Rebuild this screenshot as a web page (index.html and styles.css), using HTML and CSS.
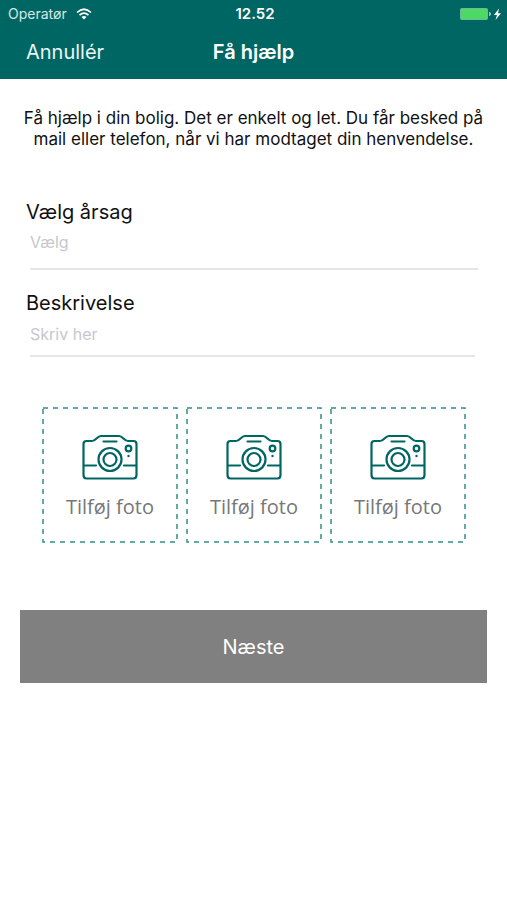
FILE: index.html
```
<!DOCTYPE html>
<html lang="da">
<head>
<meta charset="utf-8">
<meta name="viewport" content="width=device-width, initial-scale=1">
<title>Få hjælp</title>
<link rel="stylesheet" href="styles.css">
</head>
<body>
<svg class="symbols" aria-hidden="true">
  <symbol id="camera" viewBox="0 0 56 46">
    <g fill="none" stroke="currentColor" stroke-width="2.200" stroke-linecap="round" stroke-linejoin="round">
      <path d="M4.500 7H10C14 7 15 2 19 2H37C41 2 42 7 46 7H51.500Q54.500 7 54.500 10V41Q54.500 44.500 51.500 44.500H4.500Q1.500 44.500 1.500 41V10Q1.500 7 4.500 7Z"/>
      <path d="M21.500 7.500H34.500M2 31.500H14M42 31.500H54"/>
      <circle cx="28" cy="25.500" r="11.500"/>
      <circle cx="28" cy="25.500" r="6.500"/>
      <circle cx="46.500" cy="14.500" r="2.800"/>
    </g>
    <circle cx="46.500" cy="22" r="1.200" fill="currentColor"/>
  </symbol>
</svg>
<header class="top">
  <div class="status">
    <div class="carrier">
      <span>Operatør</span>
      <svg class="wifi" viewBox="0 0 16 12" aria-hidden="true">
        <g fill="none" stroke="currentColor" stroke-width="1.700">
          <path d="M1 4.500Q8 -2 15 4.500"/>
          <path d="M3.500 7.200Q8 3 12.500 7.200"/>
        </g>
        <path d="M5.500 9Q8 7 10.500 9L8 11.500Z" fill="currentColor"/>
      </svg>
    </div>
    <time class="clock">12.52</time>
    <svg class="battery" viewBox="0 0 42 14" aria-hidden="true">
      <rect x="0.500" y="1.500" width="27" height="11" rx="1" fill="#4cd964" stroke="#6fb7a0"/>
      <path d="M29 5q2 0 2 2t-2 2z" fill="#9cc8c5"/>
      <path d="M39 1.500L34 8h3l-1.500 5L41 6.200h-3z" fill="#fff"/>
    </svg>
  </div>
  <nav class="bar">
    <button class="cancel" type="button">Annullér</button>
    <h1>Få hjælp</h1>
  </nav>
</header>
<main>
  <p class="intro">Få hjælp i din bolig. Det er enkelt og let. Du får besked på mail eller telefon, når vi har modtaget din henvendelse.</p>
  <form>
    <div class="field">
      <label for="reason">Vælg årsag</label>
      <select id="reason"><option>Vælg</option></select>
    </div>
    <div class="field description">
      <label for="description">Beskrivelse</label>
      <input id="description" type="text" placeholder="Skriv her">
    </div>
    <div class="photos">
      <button class="photo" type="button">
        <svg class="dashes" aria-hidden="true"><rect width="100%" height="100%"/></svg>
        <svg class="camera" aria-hidden="true"><use href="#camera"/></svg>
        <span>Tilføj foto</span>
      </button>
      <button class="photo" type="button">
        <svg class="dashes" aria-hidden="true"><rect width="100%" height="100%"/></svg>
        <svg class="camera" aria-hidden="true"><use href="#camera"/></svg>
        <span>Tilføj foto</span>
      </button>
      <button class="photo" type="button">
        <svg class="dashes" aria-hidden="true"><rect width="100%" height="100%"/></svg>
        <svg class="camera" aria-hidden="true"><use href="#camera"/></svg>
        <span>Tilføj foto</span>
      </button>
    </div>
    <button class="next" type="submit">Næste</button>
  </form>
</main>
</body>
</html>
```
FILE: styles.css
```
* { box-sizing: border-box; }
body {
  margin: 0;
  background: #fff;
  color: #111;
  font-family: Inter, "Liberation Sans", sans-serif;
}
button, input, select {
  margin: 0;
  padding: 0;
  border: 0;
  border-radius: 0;
  background: none;
  font: inherit;
}
.symbols { display: none; }
.top { background: #006663; color: #fff; }
.status {
  display: grid;
  grid-template-columns: 1fr auto 1fr;
  align-items: center;
  height: 27px;
  padding: 0 5px 0 8px;
  font-size: 14px;
}
.carrier { display: flex; align-items: center; gap: 9px; color: #d5e8e7; }
.wifi { width: 16px; height: 12px; color: #fff; }
.clock { font-size: 15px; font-weight: 600; }
.battery { width: 42px; height: 14px; justify-self: end; }
.bar {
  display: grid;
  grid-template-columns: 1fr auto 1fr;
  align-items: center;
  height: 52px;
  padding: 0 26px 2px;
}
.cancel { justify-self: start; color: #e9f4f3; font-size: 20px; }
h1 { margin: 0; font-size: 20px; font-weight: 600; }
.intro {
  margin: 0;
  padding: 29px 20px 0;
  font-size: 17px;
  line-height: 21px;
  text-align: center;
}
.field { padding: 0 29px 0 26px; margin-top: 49px; }
.description { margin-top: 20px; padding-right: 32px; }
.field label { display: block; font-size: 20px; line-height: 26px; }
.field select, .field input {
  display: block;
  width: calc(100% - 4px);
  height: 45px;
  margin-left: 4px;
  padding-bottom: 9px;
  border-bottom: 2px solid #e6e6e8;
  appearance: none;
  color: #c7c7cc;
  font-size: 16px;
  outline: 0;
}
.field input { height: 41px; padding-bottom: 4px; color: #111; }
.field input::placeholder { color: #c7c7cc; opacity: 1; }
.photos {
  display: grid;
  grid-template-columns: repeat(3, 1fr);
  gap: 8px;
  padding: 0 41px 0 42px;
  margin-top: 50px;
}
.photo {
  position: relative;
  display: flex;
  flex-direction: column;
  align-items: center;
  justify-content: center;
  gap: 14px;
  padding-top: 4px;
  aspect-ratio: 1;
  color: #777;
  font-family: "Open Sans", "Noto Sans", sans-serif;
  font-size: 20px;
  line-height: 26px;
}
.dashes {
  position: absolute;
  inset: 1px;
  width: calc(100% - 2px);
  height: calc(100% - 2px);
  overflow: visible;
  fill: none;
  stroke: #2f8f85;
  stroke-width: 1.5px;
  stroke-dasharray: 5 5;
}
.camera { width: 56px; height: 46px; color: #006663; }
.next {
  display: block;
  width: calc(100% - 40px);
  height: 73px;
  margin: 67px auto 0;
  background: #808080;
  color: #fff;
  font-size: 20px;
}
```
